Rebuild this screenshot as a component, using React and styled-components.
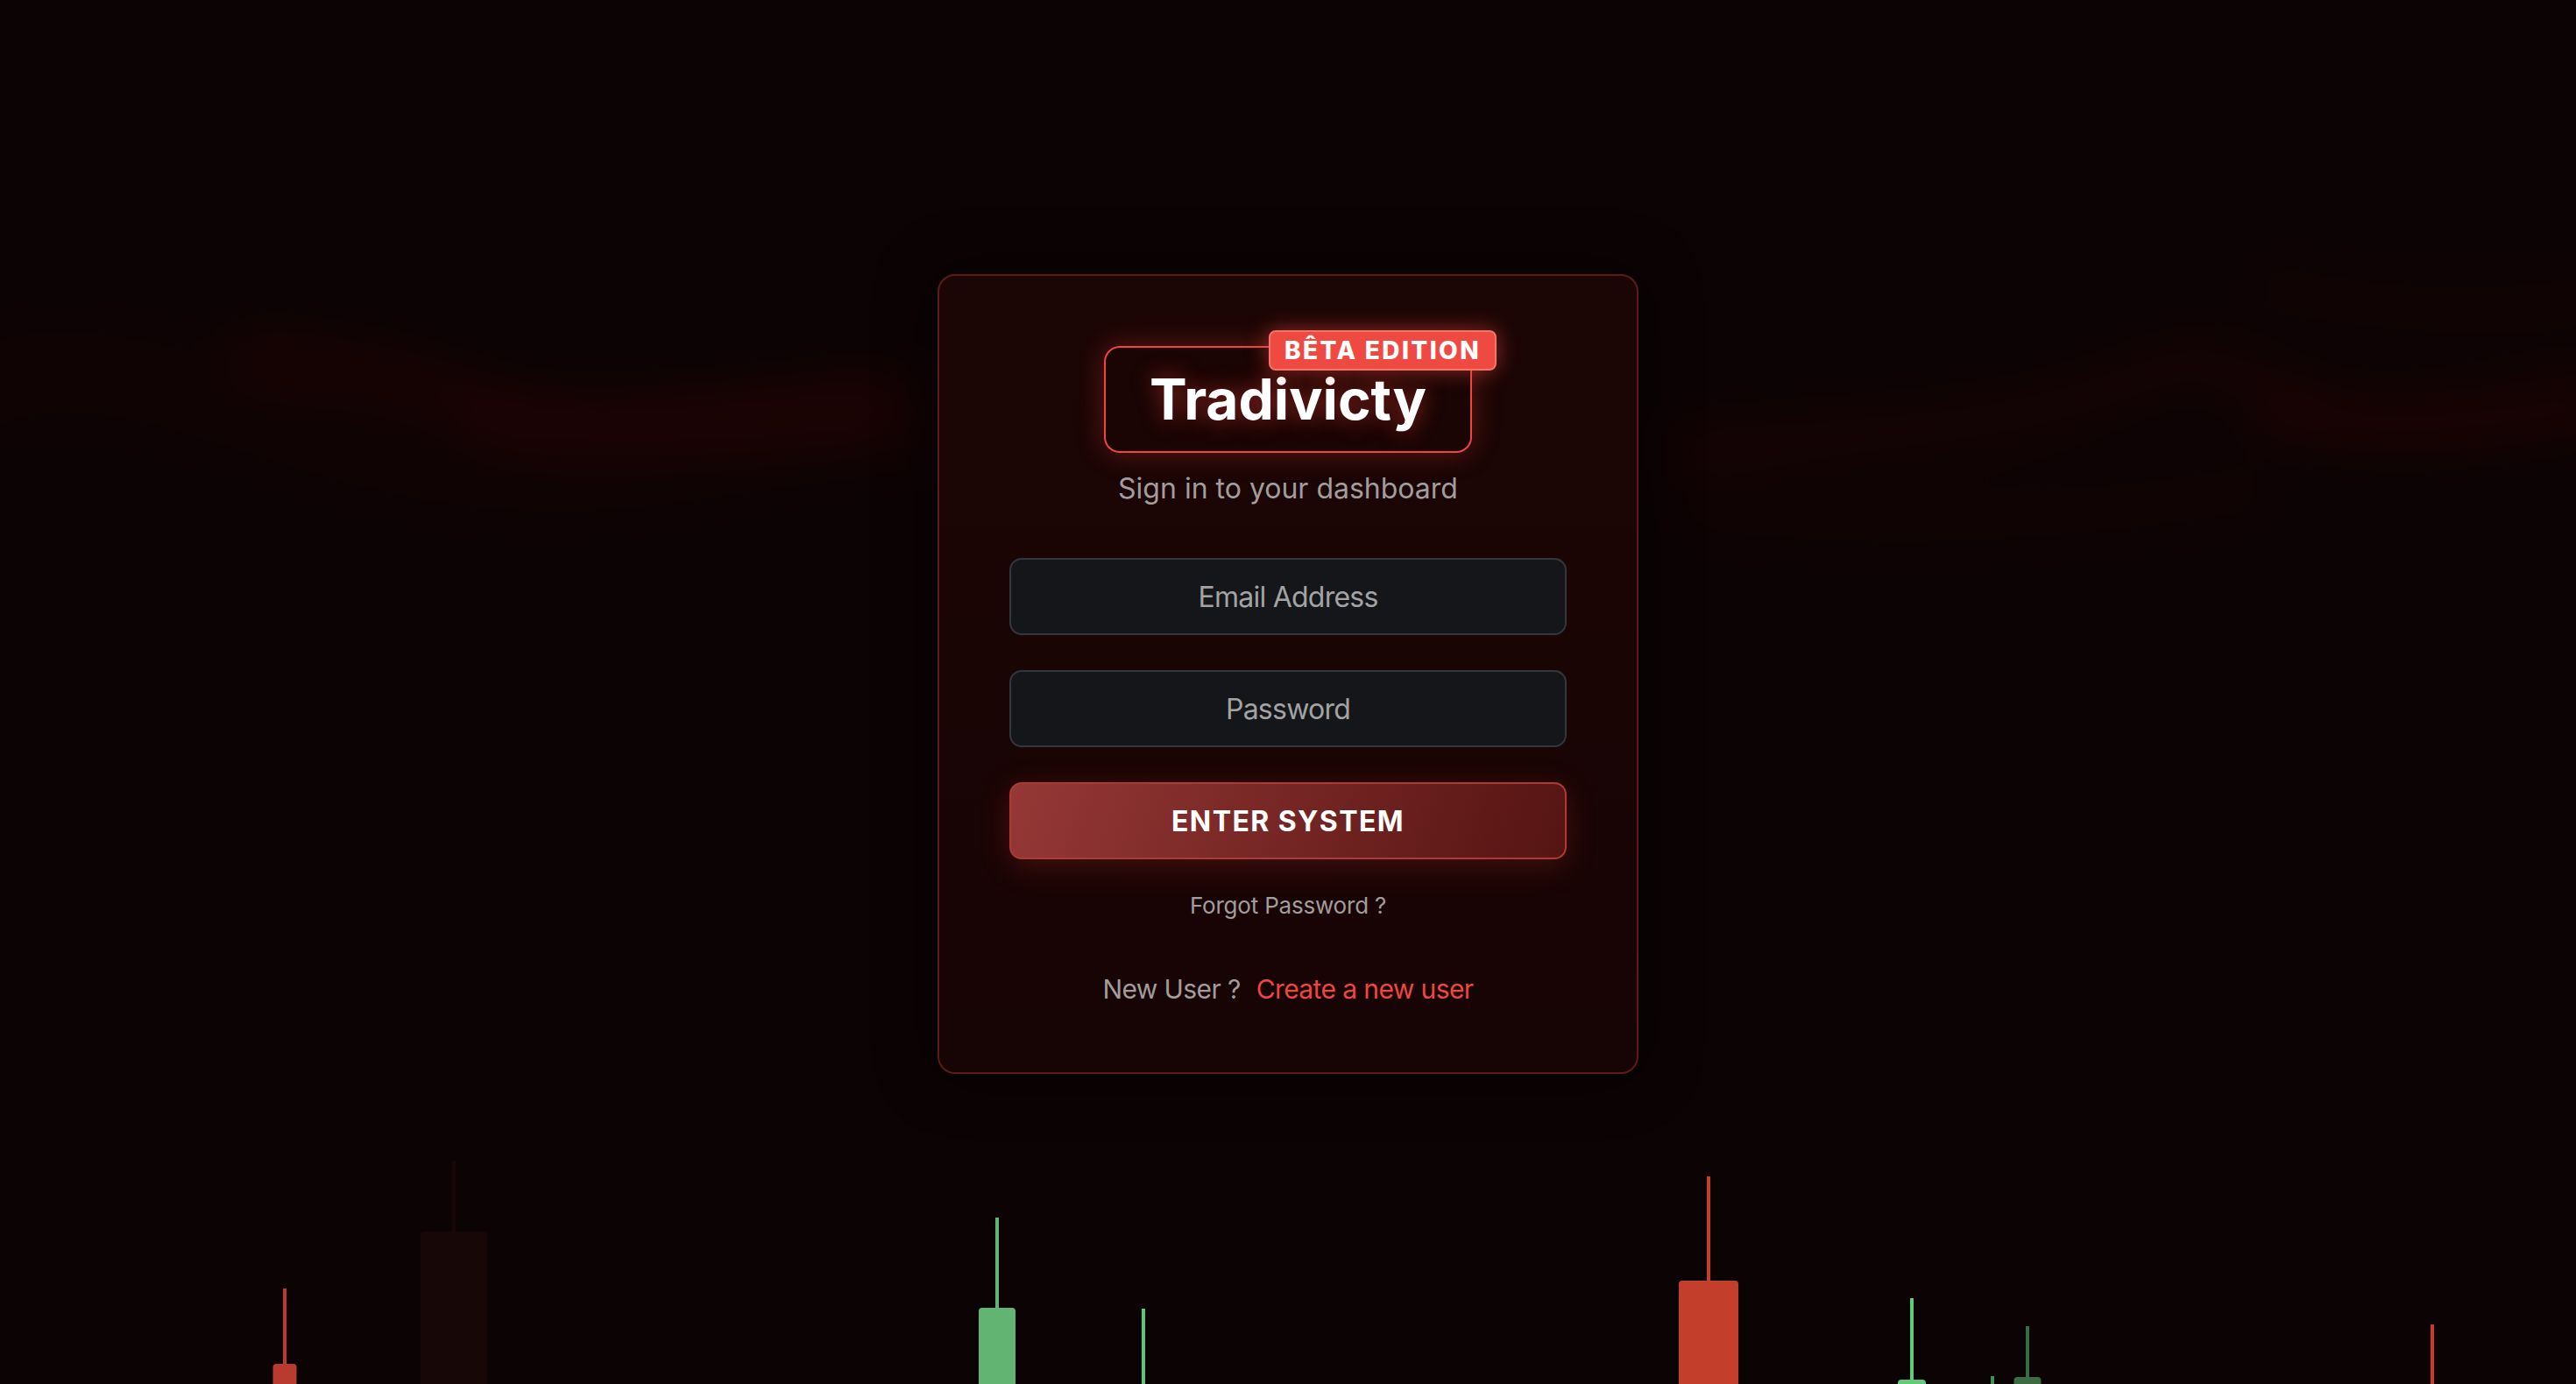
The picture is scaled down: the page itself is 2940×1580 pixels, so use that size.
import styled, { createGlobalStyle } from "styled-components";

const GlobalStyle = createGlobalStyle`
  * {
    box-sizing: border-box;
  }
  html, body {
    margin: 0;
    padding: 0;
    background: #0b0304;
    font-family: Inter, "Liberation Sans", sans-serif;
  }
`;

const Page = styled.main`
  position: relative;
  height: 1580px;
  overflow: hidden;
  display: flex;
  align-items: flex-start;
  justify-content: center;
  padding-top: 313px;
  background: #0b0304;
`;

const Chart = styled.svg`
  position: absolute;
  inset: 0;
  width: 2940px;
  height: 1580px;
`;

const Card = styled.section`
  position: relative;
  width: 800px;
  height: 913px;
  padding: 80px;
  display: flex;
  flex-direction: column;
  align-items: center;
  background: linear-gradient(180deg, #1c0605, #170404);
  border: 2px solid #5c1a18;
  border-radius: 20px;
  box-shadow: 0 0 70px rgba(0, 0, 0, 0.4);
`;

const LogoBox = styled.div`
  position: relative;
  flex-shrink: 0;
  width: 420px;
  height: 122px;
  display: flex;
  align-items: center;
  justify-content: center;
  border: 2px solid #ef4640;
  border-radius: 18px;
  box-shadow: 0 0 32px rgba(239, 68, 60, 0.3);
  background: #1a0504;
`;

const Logo = styled.h1`
  margin: 0;
  font-size: 64px;
  line-height: 1;
  font-weight: 700;
  color: #fff;
  text-shadow: 0 0 24px rgba(239, 68, 60, 0.55);
`;

const Badge = styled.span`
  position: absolute;
  top: -20px;
  right: -30px;
  height: 46px;
  padding: 0 16px;
  display: flex;
  align-items: center;
  font-size: 28px;
  font-weight: 800;
  letter-spacing: 2.4px;
  white-space: nowrap;
  color: #fff;
  background: #ef4a42;
  border: 2px solid #f4736a;
  border-radius: 8px;
  box-shadow: 0 0 24px rgba(239, 74, 66, 0.55);
`;

const Subtitle = styled.p`
  margin: 19px 0 0;
  height: 44px;
  font-size: 32px;
  line-height: 44px;
  color: #a39c9c;
`;

const Form = styled.form`
  width: 636px;
  margin-top: 57px;
  display: flex;
  flex-direction: column;
  gap: 40px;
`;

const Field = styled.input`
  height: 88px;
  width: 100%;
  padding: 0 32px;
  font: 400 32px Inter, "Liberation Sans", sans-serif;
  letter-spacing: -0.75px;
  text-align: center;
  color: #fff;
  background: #14161a;
  border: 2px solid #34363b;
  border-radius: 14px;
  outline: none;
  &::placeholder {
    color: #a3a3a3;
    opacity: 1;
  }
`;

const Submit = styled.button`
  height: 88px;
  width: 100%;
  font: 700 32px Inter, "Liberation Sans", sans-serif;
  letter-spacing: 1.4px;
  color: #fff;
  background: linear-gradient(108deg, #953836, #551412);
  border: 2px solid #ad3a35;
  border-radius: 14px;
  box-shadow: 0 8px 36px rgba(239, 68, 60, 0.2);
`;

const Forgot = styled.a`
  margin-top: 33px;
  font-size: 26px;
  line-height: 40px;
  letter-spacing: -0.2px;
  color: #a39c9c;
`;

const Signup = styled.p`
  margin: 55px 0 0;
  display: flex;
  gap: 18px;
  font-size: 30px;
  line-height: 40px;
  letter-spacing: -0.6px;
  color: #a39c9c;
`;

const SignupLink = styled.a`
  color: #ee4640;
`;

const candles = [
  { x: 325, top: 1471, bodyTop: 1557, w: 27, color: "#b93a2e" },
  { x: 518, top: 1325, bodyTop: 1406, w: 76, color: "#170707" },
  { x: 1138, top: 1390, bodyTop: 1493, w: 42, color: "#62b472" },
  { x: 1305, top: 1494, bodyTop: 1600, w: 20, color: "#5ec776" },
  { x: 1950, top: 1343, bodyTop: 1462, w: 68, color: "#c43e2c" },
  { x: 2182, top: 1482, bodyTop: 1575, w: 32, color: "#62cc75" },
  { x: 2274, top: 1571, bodyTop: 1600, w: 20, color: "#3f9150" },
  { x: 2314, top: 1514, bodyTop: 1572, w: 31, color: "#3a6b43" },
  { x: 2776, top: 1512, bodyTop: 1600, w: 20, color: "#c63a2e" },
];

// faint red waves behind the card
const waves = [
  { d: "M-40 450 C 120 370, 300 500, 520 530 S 800 500, 1040 480", width: 130, alpha: 0.04 },
  { d: "M290 405 C 380 410, 480 430, 540 455", width: 60, alpha: 0.1 },
  { d: "M570 475 C 680 490, 820 480, 1000 465", width: 60, alpha: 0.14 },
  { d: "M1930 510 C 2100 495, 2300 490, 2420 440 S 2530 420, 2600 460", width: 60, alpha: 0.09 },
  { d: "M2620 470 C 2700 490, 2780 490, 2960 460", width: 60, alpha: 0.13 },
  { d: "M1950 580 C 2100 600, 2300 600, 2560 560", width: 90, alpha: 0.035 },
  { d: "M2600 330 C 2750 360, 2850 360, 2960 340", width: 90, alpha: 0.035 },
];

export default function App() {
  return (
    <>
      <GlobalStyle />
      <Page>
        <Chart viewBox="0 0 2940 1580" aria-hidden="true">
          <filter id="soft" x="-20%" y="-100%" width="140%" height="300%">
            <feGaussianBlur stdDeviation="30" />
          </filter>
          <g filter="url(#soft)" fill="none" strokeLinecap="round">
            {waves.map((w) => (
              <path key={w.d} d={w.d} stroke={`rgba(135, 24, 18, ${w.alpha})`} strokeWidth={w.width} />
            ))}
          </g>
          {candles.map((c) => (
            <g key={c.x} fill={c.color}>
              <rect x={c.x - 2} y={c.top} width="4" height={1600 - c.top} />
              <rect x={c.x - c.w / 2} y={c.bodyTop} width={c.w} height={1640 - c.bodyTop} rx="4" />
            </g>
          ))}
        </Chart>
        <Card>
          <LogoBox>
            <Logo>Tradivicty</Logo>
            <Badge>BÊTA EDITION</Badge>
          </LogoBox>
          <Subtitle>Sign in to your dashboard</Subtitle>
          <Form>
            <Field type="email" placeholder="Email Address" />
            <Field type="password" placeholder="Password" />
            <Submit type="button">ENTER SYSTEM</Submit>
          </Form>
          <Forgot>Forgot Password ?</Forgot>
          <Signup>
            New User ?<SignupLink>Create a new user</SignupLink>
          </Signup>
        </Card>
      </Page>
    </>
  );
}
